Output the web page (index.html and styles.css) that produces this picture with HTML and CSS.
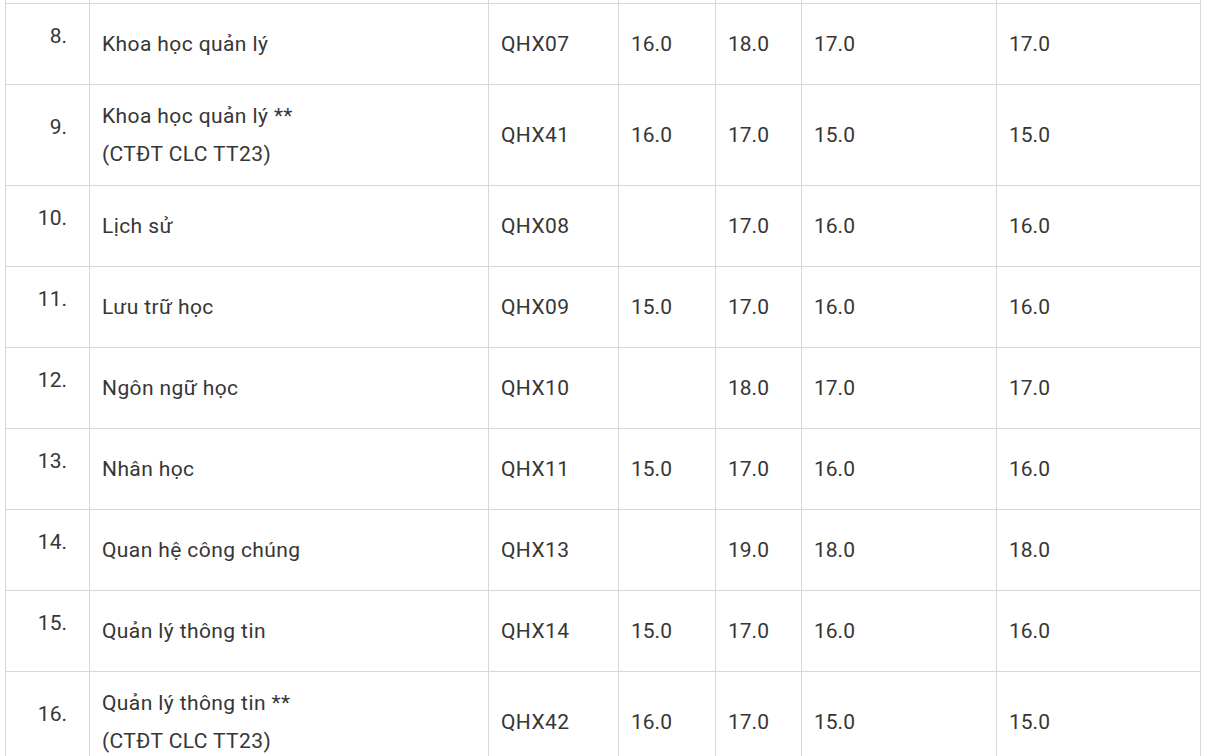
FILE: index.html
```html
<!DOCTYPE html>
<html lang="vi">
<head>
<meta charset="utf-8">
<title>Điểm chuẩn</title>
<link rel="stylesheet" href="styles.css">
</head>
<body>
<table class="scores">
  <colgroup>
    <col class="c-no"><col class="c-name"><col class="c-code"><col class="c-a"><col class="c-b"><col class="c-c"><col class="c-d">
  </colgroup>
  <tbody>
    <tr class="cut"><td></td><td></td><td></td><td></td><td></td><td></td><td></td></tr>
    <tr><td class="no"><span>8.</span></td><td class="name">Khoa học quản lý</td><td class="name">QHX07</td><td>16.0</td><td>18.0</td><td>17.0</td><td>17.0</td></tr>
    <tr class="two"><td class="no"><span>9.</span></td><td class="name">Khoa học quản lý **<br>(CTĐT CLC TT23)</td><td class="name">QHX41</td><td>16.0</td><td>17.0</td><td>15.0</td><td>15.0</td></tr>
    <tr><td class="no"><span>10.</span></td><td class="name">Lịch sử</td><td class="name">QHX08</td><td></td><td>17.0</td><td>16.0</td><td>16.0</td></tr>
    <tr><td class="no"><span>11.</span></td><td class="name">Lưu trữ học</td><td class="name">QHX09</td><td>15.0</td><td>17.0</td><td>16.0</td><td>16.0</td></tr>
    <tr><td class="no"><span>12.</span></td><td class="name">Ngôn ngữ học</td><td class="name">QHX10</td><td></td><td>18.0</td><td>17.0</td><td>17.0</td></tr>
    <tr><td class="no"><span>13.</span></td><td class="name">Nhân học</td><td class="name">QHX11</td><td>15.0</td><td>17.0</td><td>16.0</td><td>16.0</td></tr>
    <tr><td class="no"><span>14.</span></td><td class="name">Quan hệ công chúng</td><td class="name">QHX13</td><td></td><td>19.0</td><td>18.0</td><td>18.0</td></tr>
    <tr><td class="no"><span>15.</span></td><td class="name">Quản lý thông tin</td><td class="name">QHX14</td><td>15.0</td><td>17.0</td><td>16.0</td><td>16.0</td></tr>
    <tr class="two"><td class="no"><span>16.</span></td><td class="name">Quản lý thông tin **<br>(CTĐT CLC TT23)</td><td class="name">QHX42</td><td>16.0</td><td>17.0</td><td>15.0</td><td>15.0</td></tr>
  </tbody>
</table>
</body>
</html>
```

FILE: styles.css
```css
html, body {
  margin: 0;
  padding: 0;
  background: #ffffff;
}

body {
  padding-left: 5px;
  font-family: Roboto, "Noto Sans", Arial, sans-serif;
  color: #363636;
  font-size: 21px;
  overflow: hidden;
}

.scores {
  border-collapse: collapse;
  table-layout: fixed;
  width: 1195px;
}

.c-no { width: 84px; }
.c-name { width: 399px; }
.c-code { width: 130px; }
.c-a { width: 97px; }
.c-b { width: 86px; }
.c-c { width: 195px; }
.c-d { width: 204px; }

.scores td {
  border: 1px solid #d8d8d8;
  padding: 12px 12px;
  line-height: 38px;
  vertical-align: middle;
  text-align: left;
}

.scores td.name {
  letter-spacing: 0.4px;
}

.scores tr {
  height: 81px;
}

.scores tr.cut {
  height: 3px;
}

.scores tr.cut td {
  border-top: none;
  padding: 0;
  height: 2px;
  line-height: 0;
}

.scores tr.two {
  height: 101px;
}

.scores td.no {
  text-align: right;
  padding-right: 22px;
}

.scores td.no span {
  display: block;
  padding-bottom: 16px;
}
```
